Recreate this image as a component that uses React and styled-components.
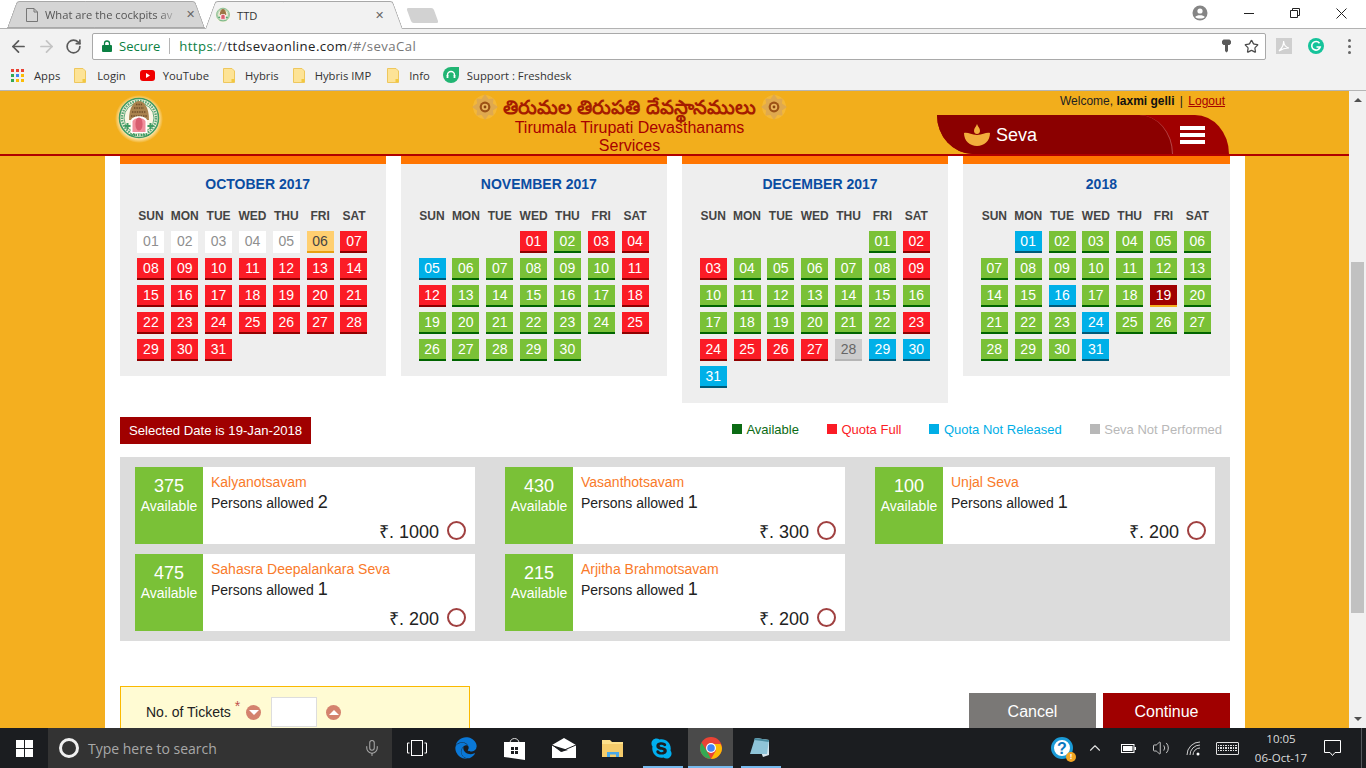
import styled, { createGlobalStyle } from "styled-components";
import { ArrowLeft, ArrowRight, RotateCw, Star, Mic, ChevronUp, Volume2 } from "lucide-react";
import { FaEdge, FaSkype } from "react-icons/fa";

const GlobalStyle = createGlobalStyle`
  html, body { margin: 0; padding: 0; height: 100%; overflow: hidden; }
  body { font-family: "Liberation Sans", Arial, sans-serif; }
  * { box-sizing: border-box; }
`;

const WEEK = ["SUN", "MON", "TUE", "WED", "THU", "FRI", "SAT"];

const fill = (from, to, status) => {
  const out = {};
  for (let d = from; d <= to; d++) out[d] = status;
  return out;
};

const MONTHS = [
  {
    title: "OCTOBER 2017",
    start: 1,
    days: 31,
    status: { ...fill(1, 5, "past"), 6: "today", ...fill(7, 31, "full") },
  },
  {
    title: "NOVEMBER 2017",
    start: 4,
    days: 30,
    status: { ...fill(1, 30, "open"), 1: "full", 3: "full", 4: "full", 5: "wait", 11: "full", 12: "full", 18: "full", 25: "full" },
  },
  {
    title: "DECEMBER 2017",
    start: 6,
    days: 31,
    status: { ...fill(1, 22, "open"), 2: "full", 3: "full", 9: "full", ...fill(23, 27, "full"), 28: "none", 29: "wait", 30: "wait", 31: "wait" },
  },
  {
    title: "2018",
    start: 2,
    days: 31,
    status: { ...fill(1, 31, "open"), 1: "wait", 16: "wait", 19: "picked", 24: "wait", 31: "wait" },
  },
];

const SEVAS = [
  { count: 375, name: "Kalyanotsavam", persons: 2, price: 1000 },
  { count: 430, name: "Vasanthotsavam", persons: 1, price: 300 },
  { count: 100, name: "Unjal Seva", persons: 1, price: 200 },
  { count: 475, name: "Sahasra Deepalankara Seva", persons: 1, price: 200 },
  { count: 215, name: "Arjitha Brahmotsavam", persons: 1, price: 200 },
];

const LEGEND = [
  { label: "Available", color: "#0b6b14" },
  { label: "Quota Full", color: "#fb1c26" },
  { label: "Quota Not Released", color: "#00aee6" },
  { label: "Seva Not Performed", color: "#b8b8b8" },
];

const DAY_COLORS = {
  past: ["#ffffff", "#ffffff", "#8f8f8f"],
  today: ["#ffcf70", "#e8a012", "#444444"],
  full: ["#fb1c26", "#8f0000", "#ffffff"],
  open: ["#7ac137", "#006400", "#ffffff"],
  wait: ["#00b0e8", "#005a78", "#ffffff"],
  none: ["#cccccc", "#b5b5b5", "#666666"],
  picked: ["#a00000", "#f4af1f", "#ffffff"],
};

const TempleLogo = ({ size }) => (
  <svg width={size} height={size} viewBox="0 0 48 48">
    <defs>
      <radialGradient id="logoGlow">
        <stop offset="0.75" stopColor="#fff6d8" />
        <stop offset="1" stopColor="#fff6d8" stopOpacity="0" />
      </radialGradient>
    </defs>
    <circle cx="24" cy="24" r="24" fill="url(#logoGlow)" />
    <circle cx="24" cy="23" r="19.5" fill="#f8f3de" stroke="#3f9b63" strokeWidth="1.6" />
    <circle cx="24" cy="23" r="17" fill="none" stroke="#5aa878" strokeWidth="2.4" strokeDasharray="1.6 1" />
    <circle cx="24" cy="23" r="15" fill="#fbf6e4" stroke="#3f9b63" strokeWidth="0.8" />
    <path d="M14 25 C14 12 19 6 24 6 C29 6 34 12 34 25 Z" fill="#a9824e" />
    <path d="M16 21 H32 M17 17 H31 M19 13 H29 M21 9.5 H27" stroke="#6f4e2a" strokeWidth="1.4" strokeDasharray="1.4 1" />
    <path d="M16 25 C18 20 30 20 32 25 L32 38 L16 38 Z" fill="#fff" />
    <path d="M17.5 26 C20 22 28 22 30.5 26 L30.5 37 L17.5 37 Z" fill="#f08f9c" />
    <ellipse cx="24" cy="29" rx="3.6" ry="6.6" fill="#d85e70" />
    <path d="M9.5 30 h2 v-2 h2 v2 h2 v2 h-2 v2 h-2 v-2 h-2 Z" fill="#3f9b63" />
    <path d="M32.5 30 h2 v-2 h2 v2 h2 v2 h-2 v2 h-2 v-2 h-2 Z" fill="#3f9b63" />
    <path d="M14 40 H22 M26 40 H34" stroke="#3f9b63" strokeWidth="2" strokeDasharray="1.5 0.8" />
  </svg>
);

const Emblem = () => (
  <svg width="26" height="26" viewBox="0 0 26 26">
    <circle cx="13" cy="13" r="12" fill="#fbd78a" opacity="0.25" />
    <path d="M13 0 L16.5 5 L21.5 4.5 L21 9.5 L26 13 L21 16.5 L21.5 21.5 L16.5 21 L13 26 L9.5 21 L4.5 21.5 L5 16.5 L0 13 L5 9.5 L4.5 4.5 L9.5 5 Z" fill="#dfa94f" />
    <circle cx="13" cy="13" r="5.4" fill="#9c5216" />
    <circle cx="13" cy="13" r="3.2" fill="#e9b55e" />
    <circle cx="13" cy="13" r="1.4" fill="#8a4410" />
  </svg>
);

const Lamp = () => (
  <svg width="26" height="23" viewBox="0 0 26 23">
    <path d="M13 0 C14 3 16 4 16 7 C16 9 14.5 10 13 10 C11.5 10 10 9 10 7 C10 4 12 3 13 0 Z" fill="#f2ae3c" />
    <path d="M0 9 C4 8 7 11 13 11 C19 11 22 8 26 9 C26 17 20 22 13 22 C6 22 0 17 0 9 Z" fill="#f2ae3c" />
  </svg>
);

const FolderMark = () => (
  <svg width="12" height="15" viewBox="0 0 12 15">
    <path d="M0.5 0.5 H9 L11.5 3 V14.5 H0.5 Z" fill="#fde396" stroke="#eec75c" />
    <rect x="8.5" y="11" width="3" height="3" fill="#f3c93f" />
  </svg>
);

const BookmarkIcons = {
  apps: (
    <svg width="13" height="13" viewBox="0 0 13 13">
      {[
        ["#ea4335", "#ea4335", "#ea4335"],
        ["#34a853", "#4285f4", "#fbbc05"],
        ["#34a853", "#fbbc05", "#fbbc05"],
      ].map((row, y) =>
        row.map((color, x) => <rect key={`${x}-${y}`} x={x * 5} y={y * 5} width="3" height="3" fill={color} />)
      )}
    </svg>
  ),
  youtube: (
    <svg width="15" height="11" viewBox="0 0 15 11">
      <rect width="15" height="11" rx="3" fill="#f00000" />
      <path d="M6 3 L10 5.5 L6 8 Z" fill="#fff" />
    </svg>
  ),
  fresh: (
    <svg width="16" height="16" viewBox="0 0 16 16">
      <path d="M8 0 H16 V8 A8 8 0 1 1 8 0 Z" fill="#21b573" />
      <path d="M4.5 9 V8 A3.5 3.5 0 0 1 11.5 8 V9" stroke="#fff" strokeWidth="1.4" fill="none" />
      <rect x="3.6" y="8" width="1.8" height="3" fill="#fff" />
      <rect x="10.6" y="8" width="1.8" height="3" fill="#fff" />
    </svg>
  ),
};

const BOOKMARKS = [
  { label: "Apps", icon: BookmarkIcons.apps, gap: 10, next: 14 },
  { label: "Login", icon: <FolderMark />, gap: 11, next: 14 },
  { label: "YouTube", icon: BookmarkIcons.youtube, gap: 8, next: 14 },
  { label: "Hybris", icon: <FolderMark />, gap: 10, next: 14 },
  { label: "Hybris IMP", icon: <FolderMark />, gap: 10, next: 16 },
  { label: "Info", icon: <FolderMark />, gap: 10, next: 13 },
  { label: "Support : Freshdesk", icon: BookmarkIcons.fresh, gap: 8, next: 0 },
];

const App = () => {
  return (
    <Screen>
      <GlobalStyle />
      <TabStrip>
        <Tab>
          <svg width="12" height="14" viewBox="0 0 12 14">
            <path d="M0.5 0.5 H8 L11.5 4 V13.5 H0.5 Z M8 0.5 V4 H11.5" fill="none" stroke="#777" />
          </svg>
          <TabTitle $faded>What are the cockpits av</TabTitle>
          <TabClose>✕</TabClose>
        </Tab>
        <Tab $active>
          <TempleLogo size={16} />
          <TabTitle>TTD</TabTitle>
          <TabClose>✕</TabClose>
        </Tab>
        <NewTab />
        <WindowControls>
          <Avatar>
            <svg width="16" height="16" viewBox="0 0 16 16">
              <circle cx="8" cy="8" r="7.5" fill="#858585" />
              <circle cx="8" cy="6" r="2.6" fill="#fff" />
              <path d="M3.2 12 C4.5 9.6 11.5 9.6 12.8 12 C11 14 5 14 3.2 12 Z" fill="#fff" />
            </svg>
          </Avatar>
          <WinButton>
            <svg width="11" height="11" viewBox="0 0 11 11"><path d="M0 5.5 H10" stroke="#222" /></svg>
          </WinButton>
          <WinButton>
            <svg width="11" height="11" viewBox="0 0 11 11">
              <path d="M0.5 2.5 H7.5 V9.5 H0.5 Z M2.5 2.5 V0.5 H9.5 V7.5 H7.5" fill="none" stroke="#222" />
            </svg>
          </WinButton>
          <WinButton>
            <svg width="11" height="11" viewBox="0 0 11 11"><path d="M0.5 0.5 L10.5 10.5 M10.5 0.5 L0.5 10.5" stroke="#222" /></svg>
          </WinButton>
        </WindowControls>
      </TabStrip>

      <Toolbar>
        <NavIcons>
          <ArrowLeft size={19} color="#5a5a5a" strokeWidth={2.2} />
          <ArrowRight size={19} color="#c4c4c4" strokeWidth={2.2} />
          <RotateCw size={17} color="#5a5a5a" strokeWidth={2.4} />
        </NavIcons>
        <Omnibox>
          <svg width="10" height="12" viewBox="0 0 10 12">
            <path d="M2.5 5 V3.5 A2.5 2.5 0 0 1 7.5 3.5 V5" stroke="#0b8043" strokeWidth="1.3" fill="none" />
            <rect y="5" width="10" height="7" rx="1" fill="#0b8043" />
          </svg>
          <SecureLabel>Secure</SecureLabel>
          <OmniDivider />
          <Url>
            <UrlScheme>https</UrlScheme>
            <UrlGrey>://</UrlGrey>
            ttdsevaonline.com
            <UrlGrey>/#/sevaCal</UrlGrey>
          </Url>
          <OmniEnd>
            <svg width="9" height="14" viewBox="0 0 9 14">
              <path d="M1.5 0.5 H7.5 L9 2 V4.5 L7.5 6 H6 V12 L4.5 13.5 L3 12 V6 H1.5 L0 4.5 V2 Z" fill="#5a5a5a" />
            </svg>
            <Star size={15} color="#4a4a4a" strokeWidth={2} />
          </OmniEnd>
        </Omnibox>
        <Extensions>
          <svg width="16" height="16" viewBox="0 0 16 16">
            <rect width="16" height="16" fill="#cfcfcf" />
            <path d="M3 13 C6 10 8 6 7.5 3 C8 7 10 9.5 13 10 C9 9.8 6 11 3 13 Z" fill="none" stroke="#fff" strokeWidth="1.2" />
          </svg>
          <svg width="16" height="16" viewBox="0 0 16 16">
            <circle cx="8" cy="8" r="8" fill="#15c39a" />
            <path d="M11.5 5.2 A4.3 4.3 0 1 0 12.2 9 H8.5" stroke="#fff" strokeWidth="1.6" fill="none" />
          </svg>
          <MenuDots>
            <i /><i /><i />
          </MenuDots>
        </Extensions>
      </Toolbar>

      <Bookmarks>
        {BOOKMARKS.map((b) => (
          <Bookmark key={b.label} $gap={b.gap} $next={b.next}>
            {b.icon}
            <span>{b.label}</span>
          </Bookmark>
        ))}
      </Bookmarks>

      <Viewport>
        <Page>
          <SiteHeader>
            <LogoSlot>
              <TempleLogo size={48} />
            </LogoSlot>
            <Brand>
              <BrandTelugu>
                <Emblem />
                <TeluguName lang="te">తిరుమల తిరుపతి దేవస్థానములు</TeluguName>
                <Emblem />
              </BrandTelugu>
              <BrandLine>Tirumala Tirupati Devasthanams</BrandLine>
              <BrandLine>Services</BrandLine>
            </Brand>
            <HeaderRight>
              <Welcome>
                Welcome, <b>laxmi gelli</b> <Pipe>|</Pipe> <a>Logout</a>
              </Welcome>
              <SevaTab>
                <SevaTitle>
                  <Lamp />
                  <span>Seva</span>
                </SevaTitle>
                <Burger>
                  <i /><i /><i />
                </Burger>
              </SevaTab>
            </HeaderRight>
          </SiteHeader>

          <Main>
            <Calendars>
              {MONTHS.map((m) => (
                <MonthCard key={m.title}>
                  <MonthTitle>{m.title}</MonthTitle>
                  <DayGrid>
                    {WEEK.map((w) => (
                      <WeekDay key={w}>{w}</WeekDay>
                    ))}
                    {Array.from({ length: m.days }, (_, i) => i + 1).map((d) => (
                      <Day key={d} $status={m.status[d]} $start={d === 1 ? m.start : undefined}>
                        {String(d).padStart(2, "0")}
                      </Day>
                    ))}
                  </DayGrid>
                </MonthCard>
              ))}
            </Calendars>

            <SelectedRow>
              <SelectedDate>Selected Date is 19-Jan-2018</SelectedDate>
              <Legend>
                {LEGEND.map((l) => (
                  <LegendItem key={l.label} $color={l.color}>
                    {l.label}
                  </LegendItem>
                ))}
              </Legend>
            </SelectedRow>

            <SevaPanel>
              {SEVAS.map((s) => (
                <SevaCard key={s.name}>
                  <Count>
                    <strong>{s.count}</strong>
                    <span>Available</span>
                  </Count>
                  <SevaBody>
                    <SevaName>{s.name}</SevaName>
                    <Persons>
                      Persons allowed <b>{s.persons}</b>
                    </Persons>
                    <PriceRow>
                      <span>₹. {s.price}</span>
                      <Radio />
                    </PriceRow>
                  </SevaBody>
                </SevaCard>
              ))}
            </SevaPanel>

            <BottomRow>
              <TicketBox>
                <TicketLabel>
                  No. of Tickets <sup>*</sup>
                </TicketLabel>
                <Stepper />
                <TicketInput />
                <Stepper $up />
              </TicketBox>
              <Actions>
                <ActionButton $color="#7a7876">Cancel</ActionButton>
                <ActionButton $color="#a00000">Continue</ActionButton>
              </Actions>
            </BottomRow>
          </Main>
        </Page>
        <Scrollbar>
          <ScrollArrow />
          <ScrollThumb />
          <ScrollArrow $down />
        </Scrollbar>
      </Viewport>

      <Taskbar>
        <StartButton>
          <svg width="17" height="17" viewBox="0 0 17 17" fill="#fff">
            <rect width="8" height="8" />
            <rect x="9" width="8" height="8" />
            <rect y="9" width="8" height="8" />
            <rect x="9" y="9" width="8" height="8" />
          </svg>
        </StartButton>
        <SearchBox>
          <CortanaRing />
          <SearchText>Type here to search</SearchText>
          <Mic size={18} color="#a8a8a8" strokeWidth={1.4} />
        </SearchBox>
        <TaskSlot>
          <svg width="20" height="16" viewBox="0 0 20 16" fill="none" stroke="#fff">
            <rect x="4.5" y="0.5" width="11" height="15" />
            <path d="M2.5 3 H0.5 V13 H2.5 M17.5 3 H19.5 V13 H17.5" />
          </svg>
        </TaskSlot>
        <TaskSlot>
          <FaEdge size={22} color="#0a78d7" />
        </TaskSlot>
        <TaskSlot>
          <svg width="21" height="23" viewBox="0 0 21 23">
            <path d="M6 6 C6 0 15 0 15 6" fill="none" stroke="#ddd" />
            <path d="M0 5 H21 V23 L0 20 Z" fill="#fff" />
            <path d="M7 10 H10 V13 H7 Z M11 10 H14 V13 H11 Z M7 14 H10 V17 H7 Z M11 14 H14 V17 H11 Z" fill="#1b1d20" />
          </svg>
        </TaskSlot>
        <TaskSlot>
          <svg width="24" height="20" viewBox="0 0 24 20">
            <path d="M0 7 L12 0 L24 7 V20 H0 Z" fill="#fff" />
            <path d="M0 7 L16 12 L9 14 Z" fill="#1b1d20" />
            <path d="M0 7 L10 13 L24 7" fill="none" stroke="#1b1d20" strokeWidth="1" />
          </svg>
        </TaskSlot>
        <TaskSlot>
          <svg width="22" height="19" viewBox="0 0 22 19">
            <path d="M0 1 H8 L10 3 H21 V18 H0 Z" fill="#fde08a" />
            <path d="M0 5 H21 V18 H0 Z" fill="#f5cc6b" />
            <path d="M5 18 V13 H17 V18 H14 V15.5 H8 V18 Z" fill="#4aa8e8" />
          </svg>
        </TaskSlot>
        <TaskSlot $running>
          <FaSkype size={23} color="#00aff0" />
        </TaskSlot>
        <TaskSlot $running $current>
          <svg width="22" height="22" viewBox="0 0 22 22">
            <circle cx="11" cy="11" r="11" fill="#ea4335" />
            <path d="M11 22 A11 11 0 0 1 1.5 5.5 L6.5 13.5 L11 22 Z" fill="#34a853" />
            <path d="M22 11 A11 11 0 0 1 11 22 L16 13.5 L11 7 H20.5 A11 11 0 0 1 22 11 Z" fill="#fbbc05" />
            <circle cx="11" cy="11" r="5" fill="#fff" />
            <circle cx="11" cy="11" r="3.8" fill="#4285f4" />
          </svg>
        </TaskSlot>
        <TaskSlot $running>
          <svg width="22" height="22" viewBox="0 0 22 22">
            <path d="M6 1 L20 3 L20 18 L14 20 Z" fill="#d7e6ee" />
            <path d="M6 1 L20 3 L18 17 L1 17 Z" fill="#8fc4d8" />
            <path d="M6 1 L20 3 L19.6 5 L5 3 Z" fill="#4a8a9e" />
          </svg>
        </TaskSlot>
        <Tray>
          <TrayIcon>
            <HelpBadge>
              ?
              <em>!</em>
            </HelpBadge>
          </TrayIcon>
          <TrayIcon>
            <ChevronUp size={18} color="#e0e0e0" strokeWidth={1.5} />
          </TrayIcon>
          <TrayIcon>
            <svg width="15" height="9" viewBox="0 0 15 9">
              <rect x="0.5" y="0.5" width="12.5" height="8" fill="none" stroke="#fff" />
              <rect x="2" y="2" width="9.5" height="5" fill="#fff" />
              <rect x="13.5" y="3" width="1.5" height="3" fill="#fff" />
            </svg>
          </TrayIcon>
          <TrayIcon>
            <Volume2 size={18} color="#d8d8d8" strokeWidth={1.2} />
          </TrayIcon>
          <TrayIcon>
            <svg width="17" height="15" viewBox="0 0 17 15" fill="none" stroke="#cfcfcf">
              <path d="M1 14 A13 13 0 0 1 14 1 M4 14 A10 10 0 0 1 14 4 M7 14 A7 7 0 0 1 14 7" />
              <circle cx="12" cy="13" r="1.5" fill="#fff" stroke="none" />
            </svg>
          </TrayIcon>
          <TrayIcon>
            <KeyboardIcon>
              {Array.from({ length: 24 }, (_, i) => (
                <i key={i} />
              ))}
            </KeyboardIcon>
          </TrayIcon>
          <Clock>
            <span>10:05</span>
            <span>06-Oct-17</span>
          </Clock>
          <TrayIcon>
            <svg width="17" height="17" viewBox="0 0 17 17">
              <path d="M0.5 0.5 H16.5 V12.5 H11 L8.5 15.5 L6 12.5 H0.5 Z" fill="none" stroke="#fff" />
            </svg>
          </TrayIcon>
          <ShowDesktop />
        </Tray>
      </Taskbar>
    </Screen>
  );
};

export default App;

const Screen = styled.div`
  display: flex;
  flex-direction: column;
  width: 1366px;
  height: 768px;
  overflow: hidden;
  background: #fff;
`;

const TabStrip = styled.div`
  display: flex;
  align-items: flex-end;
  height: 28px;
  padding-left: 7px;
  background: #fff;
  font-family: "Open Sans", "Noto Sans", sans-serif;
`;

const Tab = styled.div`
  position: relative;
  z-index: ${(p) => (p.$active ? 2 : 1)};
  isolation: isolate;
  display: flex;
  align-items: center;
  gap: ${(p) => (p.$active ? "6px" : "7px")};
  width: 198px;
  height: ${(p) => (p.$active ? "28px" : "27px")};
  margin-bottom: ${(p) => (p.$active ? "-1px" : "0")};
  padding: ${(p) => (p.$active ? "0 16px 0 10px" : "0 7px 0 19px")};
  color: ${(p) => (p.$active ? "#333" : "#555")};

  &::before,
  &::after {
    content: "";
    position: absolute;
    z-index: -1;
    top: 0;
    bottom: 0;
    width: 55%;
    background: ${(p) => (p.$active ? "#f2f2f2" : "#d5d5d5")};
    border-top: 1px solid #a8a8a8;
    border-bottom: ${(p) => (p.$active ? "none" : "1px solid #a8a8a8")};
  }

  &::before {
    left: 0;
    border-left: 1px solid #a8a8a8;
    border-top-left-radius: 3px;
    transform-origin: bottom left;
    transform: skewX(-20deg);
  }

  &::after {
    right: 0;
    border-right: 1px solid #a8a8a8;
    border-top-right-radius: 3px;
    transform-origin: bottom right;
    transform: skewX(20deg);
  }
`;

const TabTitle = styled.span`
  flex: 1;
  min-width: 0;
  white-space: nowrap;
  font-size: 11.2px;
  ${(p) =>
    p.$faded &&
    "-webkit-mask-image: linear-gradient(to right, #000 85%, transparent 100%); mask-image: linear-gradient(to right, #000 85%, transparent 100%);"}
`;

const TabClose = styled.span`
  width: 12px;
  font-size: 11px;
  font-weight: 700;
  color: #666;
  font-family: "DejaVu Sans", sans-serif;
`;

const NewTab = styled.div`
  width: 27px;
  height: 15px;
  margin: 0 0 5px 6px;
  background: #d2d2d2;
  border-radius: 2px;
  transform: skewX(20deg);
`;

const WindowControls = styled.div`
  display: flex;
  align-items: center;
  align-self: flex-start;
  height: 26px;
  margin-left: auto;
  margin-right: 2px;
`;

const Avatar = styled.div`
  display: flex;
  margin-right: 18px;
`;

const WinButton = styled.div`
  display: flex;
  justify-content: center;
  align-items: center;
  width: 46px;
  height: 26px;
`;

const Toolbar = styled.div`
  display: flex;
  align-items: center;
  height: 34px;
  padding: 1px 0 0 9px;
  background: #f2f2f2;
  border-top: 1px solid #b2b2b2;
`;

const NavIcons = styled.div`
  display: flex;
  align-items: center;
  gap: 9px;
  width: 83px;
`;

const Omnibox = styled.div`
  display: flex;
  align-items: center;
  width: 1174px;
  height: 27px;
  padding: 0 6px 0 9px;
  background: #fff;
  border: 1px solid #a9a9a9;
  border-radius: 2px;
  font-family: "Open Sans", "Noto Sans", sans-serif;
  font-size: 13px;
`;

const SecureLabel = styled.span`
  margin-left: 7px;
  color: #0b8043;
`;

const OmniDivider = styled.span`
  width: 1px;
  height: 16px;
  margin: 0 9px;
  background: #b5b5b5;
`;

const Url = styled.span`
  font-size: 13.2px;
  letter-spacing: 0.4px;
  color: #222;
`;

const UrlScheme = styled.span`
  color: #0b8043;
`;

const UrlGrey = styled.span`
  color: #777;
`;

const OmniEnd = styled.div`
  display: flex;
  align-items: center;
  gap: 13px;
  margin-left: auto;
`;

const Extensions = styled.div`
  display: flex;
  align-items: center;
  gap: 16px;
  margin-left: 10px;
`;

const MenuDots = styled.div`
  display: flex;
  flex-direction: column;
  gap: 3px;
  margin-left: 8px;

  i {
    width: 3px;
    height: 3px;
    border-radius: 50%;
    background: #666;
  }
`;

const Bookmarks = styled.div`
  display: flex;
  align-items: center;
  height: 29px;
  padding: 0 0 2px 11px;
  background: #f2f2f2;
  border-bottom: 1px solid #b5b5b5;
  font-family: "Open Sans", "Noto Sans", sans-serif;
  font-size: 11.25px;
  color: #333;
`;

const Bookmark = styled.div`
  display: flex;
  align-items: center;
  gap: ${(p) => p.$gap}px;
  margin-right: ${(p) => p.$next}px;
`;

const Viewport = styled.div`
  display: flex;
  height: 637px;
`;

const Page = styled.div`
  display: flex;
  flex-direction: column;
  width: 1349px;
  overflow: hidden;
  background: #f4af1f;
`;

const SiteHeader = styled.header`
  display: flex;
  flex: none;
  height: 65px;
  background: #f2ae1c;
  border-bottom: 2px solid #b00000;
`;

const LogoSlot = styled.div`
  width: 360px;
  padding: 4px 0 0 115px;
`;

const Brand = styled.div`
  display: flex;
  flex-direction: column;
  align-items: center;
  width: 450px;
  margin-left: 44.5px;
  color: #a80000;
  font-size: 16px;
  line-height: 18px;
`;

const BrandTelugu = styled.div`
  display: flex;
  align-items: center;
  gap: 5px;
  height: 23px;
  margin-top: 4px;
  margin-bottom: 1px;
`;

const TeluguName = styled.span`
  font-size: 19.6px;
  font-weight: 700;
  color: #a51c00;
  white-space: nowrap;
`;

const BrandLine = styled.div`
  white-space: nowrap;
`;

const HeaderRight = styled.div`
  display: flex;
  flex-direction: column;
  align-items: flex-end;
  margin-left: auto;
  padding-right: 120px;
`;

const Welcome = styled.div`
  height: 24px;
  padding-right: 4px;
  padding-top: 3px;
  font-size: 12px;
  color: #222;
  white-space: pre;

  b {
    color: #111;
  }

  a {
    color: #a80000;
    text-decoration: underline;
  }
`;

const Pipe = styled.span`
  margin: 0 2px;
`;

const SevaTab = styled.div`
  display: flex;
  align-items: center;
  width: 292px;
  height: 39px;
  background: #a00000;
  border-radius: 0 34px 0 36px / 0 39px 0 39px;
`;

const SevaTitle = styled.div`
  display: flex;
  align-items: center;
  gap: 6px;
  width: 236px;
  height: 39px;
  padding: 1px 0 0 27px;
  background: #8b0000;
  border-right: 1px solid #b8484a;
  border-radius: 0 34px 0 36px / 0 39px 0 39px;
  color: #fff;
  font-size: 18px;
`;

const Burger = styled.div`
  display: flex;
  flex-direction: column;
  gap: 3px;
  margin-left: 7px;

  i {
    width: 25px;
    height: 4px;
    background: #fff;
  }
`;

const Main = styled.main`
  flex: 1;
  width: 1140px;
  margin-left: 105px;
  padding: 0 15px;
  background: #fff;
`;

const Calendars = styled.div`
  display: grid;
  grid-template-columns: repeat(3, 266px) 1fr;
  column-gap: 15.15px;
  align-items: start;
`;

const MonthCard = styled.section`
  padding: 12px 0 15px 17.4px;
  background: #eee;
  border-top: 8px solid #ff7500;
`;

const MonthTitle = styled.h2`
  margin: 0 0 17px;
  font-size: 14px;
  line-height: 16px;
  font-weight: 700;
  color: #0a4da2;
  text-align: center;
  transform: translateX(-4px);
`;

const DayGrid = styled.div`
  display: grid;
  grid-template-columns: repeat(7, 27px);
  grid-template-rows: 17px;
  column-gap: 6.85px;
  row-gap: 5px;
  grid-auto-rows: 22px;
`;

const WeekDay = styled.div`
  display: flex;
  justify-content: center;
  height: 14px;
  font-size: 12px;
  line-height: 14px;
  font-weight: 700;
  color: #444;
  white-space: nowrap;
`;

const Day = styled.div`
  grid-column-start: ${(p) => p.$start ?? "auto"};
  height: 22px;
  font-size: 14px;
  line-height: 20px;
  text-align: center;
  background: ${(p) => DAY_COLORS[p.$status][0]};
  border-bottom: 2px solid ${(p) => DAY_COLORS[p.$status][1]};
  color: ${(p) => DAY_COLORS[p.$status][2]};
`;

const SelectedRow = styled.div`
  display: flex;
  justify-content: space-between;
  align-items: center;
  height: 27px;
  margin-top: 14px;
`;

const SelectedDate = styled.div`
  width: 191px;
  height: 27px;
  padding-left: 9px;
  background: #a00000;
  color: #fff;
  font-size: 13.15px;
  line-height: 27px;
  white-space: nowrap;
`;

const Legend = styled.div`
  display: flex;
  gap: 28px;
  padding: 0 8px 3px 0;
`;

const LegendItem = styled.span`
  display: flex;
  align-items: center;
  gap: 4.5px;
  font-size: 13px;
  color: ${(p) => p.$color};

  &::before {
    content: "";
    width: 10px;
    height: 10px;
    background: ${(p) => p.$color};
  }
`;

const SevaPanel = styled.div`
  display: grid;
  grid-template-columns: repeat(3, 340px);
  justify-content: space-between;
  row-gap: 10px;
  height: 184px;
  margin-top: 13px;
  padding: 10px 15px;
  background: #dcdcdc;
`;

const SevaCard = styled.article`
  display: flex;
  height: 77px;
  background: #fff;
`;

const Count = styled.div`
  display: flex;
  flex-direction: column;
  align-items: center;
  flex: none;
  width: 68px;
  padding-top: 8px;
  background: #7ac137;
  color: #fff;

  strong {
    font-size: 18px;
    font-weight: 400;
    line-height: 22px;
  }

  span {
    font-size: 14px;
    line-height: 18px;
  }
`;

const SevaBody = styled.div`
  display: flex;
  flex-direction: column;
  flex: 1;
  padding: 7px 9px 1px 8px;
`;

const SevaName = styled.div`
  font-size: 14px;
  line-height: 16px;
  color: #f97a2a;
`;

const Persons = styled.div`
  margin-top: 2px;
  font-size: 14px;
  line-height: 20px;
  color: #222;

  b {
    font-size: 18px;
    font-weight: 400;
  }
`;

const PriceRow = styled.div`
  display: flex;
  justify-content: flex-end;
  align-items: center;
  gap: 8px;
  margin-top: auto;
  font-size: 18px;
  line-height: 22px;
  color: #222;
`;

const Radio = styled.span`
  width: 19px;
  height: 19px;
  margin-top: -4px;
  border: 2px solid #a04040;
  border-radius: 50%;
`;

const BottomRow = styled.div`
  display: flex;
  justify-content: space-between;
  align-items: flex-start;
  margin-top: 45px;
`;

const TicketBox = styled.div`
  display: flex;
  align-items: center;
  width: 350px;
  height: 60px;
  padding: 0 0 8px 25px;
  background: #fffbd3;
  border: 1px solid #fbb900;
`;

const TicketLabel = styled.span`
  font-size: 14px;
  color: #222;

  sup {
    color: #c0504d;
    font-size: 14px;
    line-height: 0;
  }
`;

const Stepper = styled.span`
  display: flex;
  justify-content: center;
  align-items: center;
  width: 15px;
  height: 15px;
  margin-left: ${(p) => (p.$up ? "9px" : "6px")};
  border-radius: 50%;
  background: #d4826e;

  &::after {
    content: "";
    border-left: 5px solid transparent;
    border-right: 5px solid transparent;
    ${(p) => (p.$up ? "border-bottom: 5px solid #fff;" : "border-top: 5px solid #fff;")}
  }
`;

const TicketInput = styled.div`
  width: 46px;
  height: 30px;
  margin-left: 10px;
  background: #fff;
  border: 1px solid #ddd;
`;

const Actions = styled.div`
  display: flex;
  gap: 7px;
  margin-top: 7px;
`;

const ActionButton = styled.div`
  width: 127px;
  height: 36px;
  background: ${(p) => p.$color};
  color: #fff;
  font-size: 16px;
  line-height: 37px;
  text-align: center;
`;

const Scrollbar = styled.div`
  display: flex;
  flex-direction: column;
  align-items: center;
  width: 17px;
  background: #f1f1f1;
`;

const ScrollArrow = styled.div`
  flex: none;
  width: 0;
  height: 0;
  margin: ${(p) => (p.$down ? "auto 0 7px" : "7px 0 0")};
  border-left: 4px solid transparent;
  border-right: 4px solid transparent;
  ${(p) => (p.$down ? "border-top: 4px solid #505050;" : "border-bottom: 4px solid #505050;")}
`;

const ScrollThumb = styled.div`
  flex: none;
  width: 13px;
  height: 351px;
  margin-top: 160px;
  background: #c1c1c1;
`;

const Taskbar = styled.footer`
  display: flex;
  align-items: center;
  height: 40px;
  background: #1b1d20;
`;

const StartButton = styled.div`
  display: flex;
  justify-content: center;
  width: 48px;
`;

const SearchBox = styled.div`
  display: flex;
  align-items: center;
  width: 344px;
  height: 40px;
  padding: 0 11px;
  background: #333;
`;

const CortanaRing = styled.span`
  width: 20px;
  height: 20px;
  border: 3px solid #f0f0f0;
  border-radius: 50%;
`;

const SearchText = styled.span`
  flex: 1;
  margin-left: 9px;
  font-family: "Open Sans", "Noto Sans", sans-serif;
  font-size: 14px;
  color: #a8a8a8;
`;

const TaskSlot = styled.div`
  position: relative;
  z-index: 0;
  display: flex;
  justify-content: center;
  align-items: center;
  width: 49px;
  height: 40px;

  &::before {
    content: "";
    display: ${(p) => (p.$current ? "block" : "none")};
    position: absolute;
    z-index: -1;
    inset: 0 2px;
    background: #4a4a4a;
  }

  &::after {
    content: "";
    display: ${(p) => (p.$running ? "block" : "none")};
    position: absolute;
    left: ${(p) => (p.$current ? "2px" : "6px")};
    right: ${(p) => (p.$current ? "2px" : "3px")};
    bottom: 0;
    height: 2px;
    background: #76b9ed;
  }
`;

const Tray = styled.div`
  display: flex;
  align-items: center;
  margin-left: auto;
  padding-right: 4px;
  color: #e0e0e0;
`;

const TrayIcon = styled.div`
  display: flex;
  justify-content: center;
  align-items: center;
  width: 33px;
`;

const ShowDesktop = styled.div`
  width: 1px;
  height: 40px;
  margin-left: 12.5px;
  background: #55585c;
`;

const HelpBadge = styled.span`
  position: relative;
  width: 22px;
  height: 22px;
  border-radius: 50%;
  background: #fff;
  border: 3px solid #1a9ad6;
  color: #0a78c0;
  font-size: 16px;
  font-weight: 700;
  line-height: 17px;
  text-align: center;

  em {
    position: absolute;
    right: -6px;
    bottom: -6px;
    width: 10px;
    height: 10px;
    border-radius: 50%;
    background: #f4a622;
    color: #fff;
    font-size: 8px;
    line-height: 10px;
    font-style: normal;
  }
`;

const KeyboardIcon = styled.div`
  display: grid;
  grid-template-columns: repeat(8, 1.5px);
  gap: 1px;
  justify-content: center;
  align-content: center;
  width: 23px;
  height: 13px;
  border: 1px solid #e0e0e0;
  border-radius: 1px;

  i {
    height: 1.5px;
    background: #e0e0e0;
  }
`;

const Clock = styled.div`
  display: flex;
  flex-direction: column;
  align-items: center;
  width: 64px;
  margin: 0 2.5px 0 5.5px;
  font-family: "Open Sans", "Noto Sans", sans-serif;
  font-size: 11.5px;
  line-height: 19px;
  color: #dcdcdc;
`;
